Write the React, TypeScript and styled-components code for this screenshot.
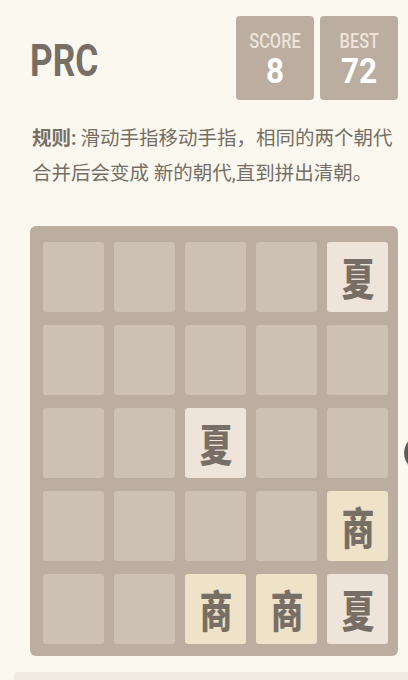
import React from "react";
import styled, { createGlobalStyle } from "styled-components";

const GlobalStyle = createGlobalStyle`
    html, body {
        margin: 0;
        padding: 0;
        background: #faf8ef;
        overflow: hidden;
    }
    body {
        font-family: Roboto, "Noto Sans CJK SC", sans-serif;
        color: #776e65;
    }
`;

const Page = styled.div`
    position: relative;
    width: 408px;
    height: 680px;
    overflow: hidden;
`;

const Container = styled.div`
    padding: 16px 10px 0 30px;
`;

const Header = styled.div`
    display: flex;
    align-items: center;
    justify-content: space-between;
    height: 84px;
`;

const Title = styled.h1`
    margin: 6px 0 0 0;
    font-family: Roboto, sans-serif;
    font-weight: 700;
    font-size: 44px;
    line-height: 1;
    color: #776e65;
    transform: scaleX(0.8);
    transform-origin: left center;
`;

const Scores = styled.div`
    display: flex;
    gap: 6px;
`;

const ScoreBox = styled.div`
    width: 78px;
    height: 84px;
    box-sizing: border-box;
    padding-top: 13px;
    border-radius: 4px;
    background: #bbada0;
    display: flex;
    flex-direction: column;
    align-items: center;
`;

const ScoreLabel = styled.div`
    font-family: Roboto, sans-serif;
    font-weight: 500;
    font-size: 21px;
    line-height: 24px;
    color: #eee4da;
    transform: scaleX(0.78);
`;

const ScoreValue = styled.div`
    font-family: Roboto, sans-serif;
    font-weight: 700;
    font-size: 35px;
    line-height: 38px;
    color: #ffffff;
    transform: scaleX(0.9);
`;

const Rules = styled.div`
    margin: 21px 0 0 2px;
    font-family: Roboto, "Noto Sans CJK SC", sans-serif;
    font-size: 19.5px;
    line-height: 35px;
    color: #776e65;
`;

const RuleLabel = styled.span`
    font-weight: 700;
    margin-right: 4px;
`;

const Board = styled.div`
    margin-top: 35px;
    padding: 16px 10px 12px 13px;
    border-radius: 6px;
    background: #bbada0;
    display: grid;
    grid-template-columns: repeat(5, 61px);
    grid-auto-rows: 70px;
    column-gap: 10px;
    row-gap: 13px;
`;

const Cell = styled.div<{ $kind?: string }>`
    border-radius: 3px;
    display: flex;
    align-items: center;
    justify-content: center;
    background: ${(p) =>
        p.$kind === "夏" ? "#eee4da" : p.$kind === "商" ? "#eee2c9" : "#cdc1b4"};
`;

const Dynasty = styled.span`
    font-family: "Noto Sans CJK SC", sans-serif;
    font-weight: 900;
    font-size: 44px;
    line-height: 1;
    color: #776e65;
    transform: scaleX(0.74);
`;

const Footer = styled.div`
    margin: 16px 0 0 14px;
    height: 24px;
    border-radius: 3px 0 0 0;
    background: #f0ece4;
`;

const EdgeKnob = styled.div`
    position: absolute;
    top: 434px;
    left: 404px;
    width: 40px;
    height: 38px;
    border-radius: 50%;
    background: radial-gradient(circle at 75% 50%, #8a8784 0%, #4a4846 60%, #767370 100%);
`;

const grid: string[][] = [
    ["", "", "", "", "夏"],
    ["", "", "", "", ""],
    ["", "", "夏", "", ""],
    ["", "", "", "", "商"],
    ["", "", "商", "商", "夏"],
];

const App = () => {
    return (
        <Page>
            <GlobalStyle />
            <Container>
                <Header>
                    <Title>PRC</Title>
                    <Scores>
                        <ScoreBox>
                            <ScoreLabel>SCORE</ScoreLabel>
                            <ScoreValue>8</ScoreValue>
                        </ScoreBox>
                        <ScoreBox>
                            <ScoreLabel>BEST</ScoreLabel>
                            <ScoreValue>72</ScoreValue>
                        </ScoreBox>
                    </Scores>
                </Header>
                <Rules>
                    <RuleLabel>规则:</RuleLabel>滑动手指移动手指，相同的两个朝代
                    <br />
                    合并后会变成 新的朝代,直到拼出清朝。
                </Rules>
                <Board>
                    {grid.flat().map((v, i) => (
                        <Cell key={i} $kind={v}>
                            {v && <Dynasty>{v}</Dynasty>}
                        </Cell>
                    ))}
                </Board>
            </Container>
            <Footer />
            <EdgeKnob />
        </Page>
    );
};

export default App;
